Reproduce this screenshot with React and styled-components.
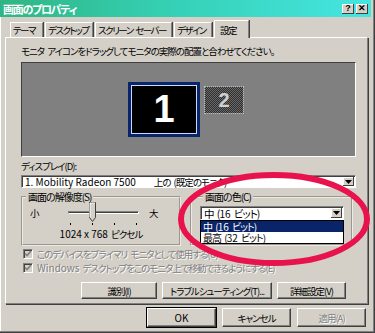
import React from "react";
import styled, { createGlobalStyle } from "styled-components";

const Global = createGlobalStyle`
  html, body { margin: 0; padding: 0; background: #d4d0c8; }
  body {
    font-family: "Noto Sans CJK JP", sans-serif;
    font-size: 9.5px;
    color: #000;
    font-feature-settings: "palt" 1;
    letter-spacing: -1px;
    word-spacing: 2px;
  }
  * { box-sizing: border-box; }
`;

const Lt = styled.span`
  letter-spacing: 0;
  word-spacing: 0;
  font-size: 10px;
  margin-right: ${(p) => p.$mr || 0}px;
`;

const Window = styled.div`
  position: relative;
  width: 375px;
  height: 333px;
  background: #d4d0c8;
  border-right: 1px solid #404040;
  border-bottom: 1px solid #404040;
  box-shadow: inset -1px -1px 0 #808080, inset 1px 0 0 #ffffff;
  display: flex;
  flex-direction: column;
  overflow: hidden;
`;

const TitleBar = styled.div`
  height: 17px;
  margin-right: 3px;
  display: flex;
  align-items: center;
  padding: 0 3px;
  background: linear-gradient(to right, #2fb583 0%, #35d0b4 45%, #45e6e2 100%);
`;

const Title = styled.div`
  flex: 1;
  color: #fff;
  font-weight: bold;
  font-size: 11px;
  letter-spacing: -1.3px;
`;

const TitleButton = styled.div`
  width: 12px;
  height: 10px;
  margin-left: ${(p) => (p.$gap ? "2px" : "0")};
  background: #d4d0c8;
  box-shadow: inset -1px -1px 0 #404040, inset 1px 1px 0 #fff;
  display: flex;
  align-items: center;
  justify-content: center;
  font-family: "Liberation Sans", sans-serif;
  font-weight: bold;
  font-size: 9px;
  line-height: 1;
  letter-spacing: 0;
`;

const Body = styled.div`
  flex: 1;
  display: flex;
  flex-direction: column;
  padding: 3px 6px 0 5px;
`;

const Tabs = styled.div`
  display: flex;
  align-items: flex-end;
  gap: 2px;
  height: 17px;
  padding-left: 5px;
  position: relative;
  z-index: 1;
`;

const Tab = styled.div`
  width: ${(p) => p.$w}px;
  height: ${(p) => (p.$active ? "18px" : "15px")};
  margin-bottom: ${(p) => (p.$active ? "-1px" : "0")};
  padding-left: ${(p) => (p.$active ? "5px" : "2px")};
  display: flex;
  align-items: center;
  background: #d4d0c8;
  border-top: 1px solid #fff;
  border-left: 1px solid #fff;
  border-right: 1px solid #808080;
  box-shadow: 1px 0 0 #404040;
  white-space: nowrap;
  overflow: hidden;
  letter-spacing: -1.5px;
`;

const Panel = styled.div`
  height: 267px;
  border-top: 1px solid #fff;
  border-left: 1px solid #fff;
  border-right: 1px solid #808080;
  border-bottom: 1px solid #808080;
  box-shadow: 1px 1px 0 #404040;
  padding: 6px 12px 0 15px;
  display: flex;
  flex-direction: column;
`;

const Instruction = styled.div`
  height: 14px;
  line-height: 14px;
  white-space: nowrap;
`;

const Preview = styled.div`
  position: relative;
  margin-top: 4px;
  height: 95px;
  margin-right: -1px;
  background: #808080;
  border-top: 1px solid #404040;
  border-left: 1px solid #404040;
  border-right: 1px solid #fff;
  border-bottom: 1px solid #fff;
`;

const Monitor = styled.div`
  position: absolute;
  display: flex;
  align-items: center;
  justify-content: center;
  font-family: "Liberation Sans", sans-serif;
  font-weight: bold;
  letter-spacing: 0;
`;

const MonitorOne = styled(Monitor)`
  left: 106px;
  top: 19px;
  width: 72px;
  height: 55px;
  background: #000;
  border: 3px solid #0a246a;
  box-shadow: inset 0 0 0 1px #c8d8ff;
  color: #fff;
  font-size: 38px;
`;

const MonitorTwo = styled(Monitor)`
  left: 183px;
  top: 24px;
  width: 38px;
  height: 26px;
  background: repeating-conic-gradient(#2e2e2e 0 25%, #6a6a6a 0 50%) 0 0 / 2px 2px;
  outline: 1px dotted #bbb;
  color: #d0d0d0;
  font-size: 20px;
`;

const Label = styled.div`
  margin-top: 2px;
  height: 14px;
  line-height: 14px;
  white-space: nowrap;
`;

const Combo = styled.div`
  position: relative;
  height: ${(p) => p.$h || 13}px;
  margin-top: ${(p) => p.$mt || 0}px;
  margin-right: ${(p) => p.$mr || 0}px;
  background: #fff;
  border-top: 1px solid #808080;
  border-left: 1px solid #808080;
  border-right: 1px solid #fff;
  border-bottom: 1px solid #fff;
  box-shadow: inset 1px 1px 0 #404040;
  display: flex;
  align-items: center;
  padding-left: 3px;
  white-space: nowrap;
`;

const ComboText = styled.div`
  flex: 1;
  line-height: 11px;
  font-size: ${(p) => p.$fs || 9.5}px;
`;

const DropButton = styled.div`
  width: 11px;
  align-self: stretch;
  margin: 1px;
  background: #d4d0c8;
  box-shadow: inset -1px -1px 0 #404040, inset 1px 1px 0 #fff;
  display: flex;
  align-items: center;
  justify-content: center;
`;

const GroupRow = styled.div`
  display: flex;
  margin-top: 3px;
  height: 55px;
  gap: 9px;
`;

const Group = styled.fieldset`
  margin: 0;
  padding: 0 ${(p) => p.$pr || 0}px 0 ${(p) => p.$pl || 0}px;
  width: ${(p) => p.$w}px;
  border: 2px groove #eeeae2;
  display: flex;
  flex-direction: column;
  min-width: 0;
`;

const Legend = styled.legend`
  padding: 0 2px;
  margin-left: 3px;
  line-height: 12px;
  font-size: 10px;
`;

const SliderRow = styled.div`
  display: flex;
  align-items: center;
  height: 22px;
  padding-left: 7px;
  margin-top: -1px;
`;

const SliderEnd = styled.span`
  width: ${(p) => p.$w}px;
`;

const Track = styled.div`
  position: relative;
  width: 71px;
  height: 22px;
  margin-right: 10px;
`;

const TrackLine = styled.div`
  position: absolute;
  left: 0;
  right: 0;
  top: 9px;
  height: 3px;
  border-top: 1px solid #808080;
  border-left: 1px solid #808080;
  border-bottom: 1px solid #fff;
  border-right: 1px solid #fff;
  box-shadow: inset 0 1px 0 #404040;
`;

const Thumb = styled.svg`
  position: absolute;
  left: 21px;
  top: 0;
`;

const Tick = styled.div`
  position: absolute;
  top: 21px;
  left: ${(p) => p.$x}px;
  width: 1px;
  height: 2px;
  background: #000;
`;

const Resolution = styled.div`
  text-align: center;
  line-height: 12px;
  margin-top: 4px;
  white-space: nowrap;
`;

const ListBox = styled.div`
  position: absolute;
  left: -1px;
  right: -1px;
  top: 13px;
  background: #fff;
  border: 1px solid #000;
  z-index: 2;
`;

const ListItem = styled.div`
  height: 11px;
  line-height: 11px;
  padding-left: 2px;
  font-size: 10px;
  white-space: nowrap;
  background: ${(p) => (p.$sel ? "#0a246a" : "#fff")};
  color: ${(p) => (p.$sel ? "#fff" : "#000")};
`;

const CheckRow = styled.div`
  display: flex;
  align-items: center;
  height: 13px;
  margin-top: ${(p) => p.$mt || 0}px;
  padding-left: 2px;
  color: #808080;
  text-shadow: 1px 1px 0 #fff;
  white-space: nowrap;
`;

const CheckBox = styled.div`
  width: 10px;
  height: 10px;
  margin-right: 4px;
  background: #d4d0c8;
  border-top: 1px solid #808080;
  border-left: 1px solid #808080;
  border-right: 1px solid #fff;
  border-bottom: 1px solid #fff;
  box-shadow: inset 1px 1px 0 #404040;
  display: flex;
  align-items: center;
  justify-content: center;
`;

const ButtonRow = styled.div`
  display: flex;
  justify-content: flex-end;
  gap: ${(p) => p.$gap}px;
  margin-top: ${(p) => p.$mt}px;
  margin-right: ${(p) => p.$mr}px;
`;

const Button = styled.div`
  width: ${(p) => p.$w}px;
  height: ${(p) => p.$h || 17}px;
  background: #d4d0c8;
  border-top: 1px solid #fff;
  border-left: 1px solid #fff;
  border-right: 1px solid #404040;
  border-bottom: 1px solid #404040;
  box-shadow: inset -1px -1px 0 #808080;
  display: flex;
  align-items: center;
  justify-content: center;
  white-space: nowrap;
  color: ${(p) => (p.$disabled ? "#808080" : "#000")};
  text-shadow: ${(p) => (p.$disabled ? "1px 1px 0 #fff" : "none")};
  outline: ${(p) => (p.$default ? "1px solid #000" : "none")};
`;

const Overlay = styled.svg`
  position: absolute;
  left: 0;
  top: 0;
  pointer-events: none;
  z-index: 5;
`;

const Arrow = () => (
  <svg width="7" height="4" viewBox="0 0 7 4">
    <path d="M0 0h7L3.5 4z" fill="#000" />
  </svg>
);

const Check = () => (
  <svg width="8" height="8" viewBox="0 0 8 8">
    <path d="M1 3.5l2 2 4-4.5" stroke="#808080" strokeWidth="1.6" fill="none" />
  </svg>
);

const TABS = [
  { t: "テーマ", w: 33 },
  { t: "デスクトップ", w: 48 },
  { t: "スクリーン セーバー", w: 77 },
  { t: "デザイン", w: 38 },
  { t: "設定", w: 35, active: true },
];

export default function App() {
  return (
    <>
      <Global />
      <Window>
        <TitleBar>
          <Title>画面のプロパティ</Title>
          <TitleButton>?</TitleButton>
          <TitleButton $gap>✕</TitleButton>
        </TitleBar>
        <Body>
          <Tabs>
            {TABS.map((tab) => (
              <Tab key={tab.t} $w={tab.w} $active={tab.active}>
                {tab.t}
              </Tab>
            ))}
          </Tabs>
          <Panel>
            <Instruction>モニタ アイコンをドラッグしてモニタの実際の配置と合わせてください。</Instruction>
            <Preview>
              <MonitorOne>1</MonitorOne>
              <MonitorTwo>2</MonitorTwo>
            </Preview>
            <Label>ディスプレイ(D):</Label>
            <Combo $mt={2} $mr={-1}>
              <ComboText>
                <Lt $mr={18}>1. Mobility Radeon 7500</Lt>上の (既定のモニタ)
              </ComboText>
              <DropButton>
                <Arrow />
              </DropButton>
            </Combo>
            <GroupRow>
              <Group $w={160}>
                <Legend>画面の解像度(S)</Legend>
                <SliderRow>
                  <SliderEnd $w={38}>小</SliderEnd>
                  <Track>
                    <TrackLine />
                    <Thumb width="7" height="21" viewBox="0 0 7 21">
                      <path d="M0.5 0.5h6v15l-3 4l-3-4z" fill="#d4d0c8" stroke="#404040" />
                      <path d="M1 1h5M1 1v14" stroke="#fff" />
                    </Thumb>
                    {[2, 24, 46, 68].map((x) => (
                      <Tick key={x} $x={x} />
                    ))}
                  </Track>
                  <SliderEnd $w={12}>大</SliderEnd>
                </SliderRow>
                <Resolution>
                  <Lt>1024 x 768</Lt> ピクセル
                </Resolution>
              </Group>
              <Group $w={163} $pl={8} $pr={7}>
                <Legend>画面の色(C)</Legend>
                <Combo $h={14} $mt={3}>
                  <ComboText $fs={10.5}>
                    中 (<Lt>16</Lt> ビット)
                  </ComboText>
                  <DropButton>
                    <Arrow />
                  </DropButton>
                  <ListBox>
                    <ListItem $sel>
                      中 (<Lt>16</Lt> ビット)
                    </ListItem>
                    <ListItem>
                      最高 (<Lt>32</Lt> ビット)
                    </ListItem>
                  </ListBox>
                </Combo>
              </Group>
            </GroupRow>
            <CheckRow $mt={1}>
              <CheckBox>
                <Check />
              </CheckBox>
              このデバイスをプライマリ モニタとして使用する(U)
            </CheckRow>
            <CheckRow $mt={1}>
              <CheckBox>
                <Check />
              </CheckBox>
              <Lt $mr={3}>Windows</Lt>デスクトップをこのモニタ上で移動できるようにする(E)
            </CheckRow>
            <ButtonRow $gap={5} $mt={8} $mr={9}>
              <Button $w={76}>識別(I)</Button>
              <Button $w={110}>トラブルシューティング(T)...</Button>
              <Button $w={69}>詳細設定(V)</Button>
            </ButtonRow>
          </Panel>
          <ButtonRow $gap={6} $mt={4} $mr={2}>
            <Button $w={69} $h={19} $default>
              <Lt>OK</Lt>
            </Button>
            <Button $w={69} $h={19}>キャンセル</Button>
            <Button $w={69} $h={19} $disabled>適用(A)</Button>
          </ButtonRow>
        </Body>
        <Overlay width="375" height="333" viewBox="0 0 375 333">
          <ellipse cx="274" cy="219" rx="93" ry="44" fill="none" stroke="#e8124c" strokeWidth="6" />
        </Overlay>
      </Window>
    </>
  );
}
